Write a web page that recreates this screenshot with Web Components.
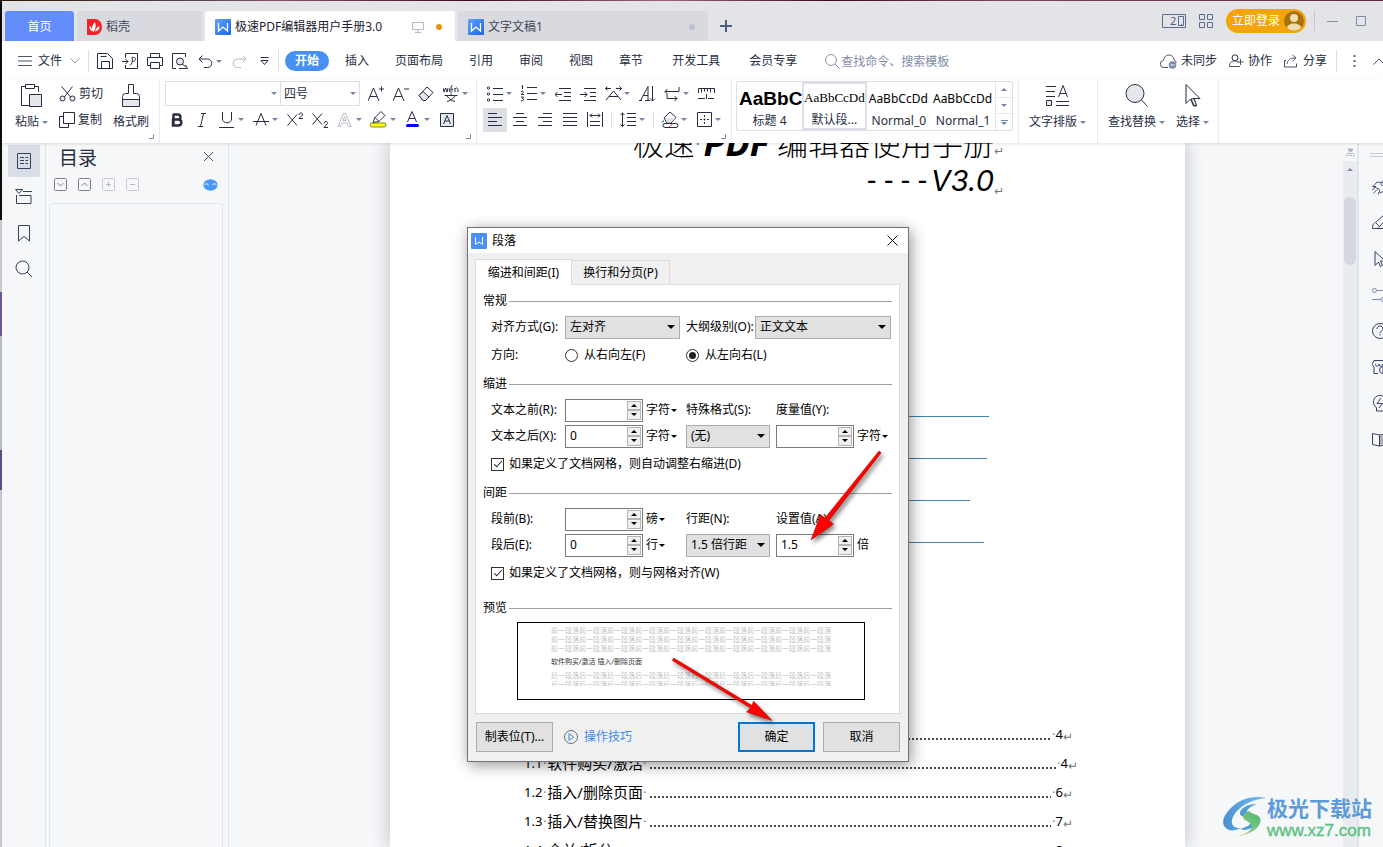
<!DOCTYPE html>
<html lang="zh-CN">
<head>
<meta charset="utf-8">
<title>极速PDF编辑器用户手册3.0</title>
<style>
html, body { margin: 0; height: 100%; overflow: hidden; }
body { font: 12px/16px "Noto Sans", "Noto Sans CJK SC", sans-serif; color: #262d3f; background: #f5f7f9; }
</style>
</head>
<body>
<wps-app></wps-app>
<script>
const base = `
:host, *, *::before, *::after { box-sizing: border-box; }
button, input, select { font: inherit; color: inherit; margin: 0; padding: 0; border: 0; background: none; border-radius: 0; }
button { cursor: default; }
a { color: inherit; text-decoration: none; }
`;

const W_LOGO = `<linearGradient id="w" x1="0" y1="0" x2="1" y2="1"><stop offset="0" stop-color="#66a3f5"/><stop offset="1" stop-color="#1467e8"/></linearGradient><rect width="16" height="16" rx="1" fill="url(#w)" stroke="none"/><path d="M3.5 4v8l4.5-4 4.5 4V4" stroke="#fff" stroke-width="1.3"/>`;

// name: [width, height, svg body]
const ICONS = {
  w: [16, 16, W_LOGO],
  wdlg: [16, 16, `<rect width="16" height="16" rx="1" fill="#4a90f5" stroke="none"/><path d="M4.500 4v7.500l3.500-2.500 3.500 2.500V4" stroke="#fff"/>`],
  docer: [15, 16, `<path d="M0 0h8a7 8 0 0 1 0 16H0z" fill="#f5222d" stroke="none"/><path d="M6.500 13C4 11 5 6 8 3c1 3 1 7-1.500 10zM5.500 12.500C3 11.500 2 9 2.500 6.500c1.500 1 2.700 3 3 6zM8 12.500c.5-2.500 2-4.500 4.500-5.500 0 3-1.500 5-4.500 5.500z" fill="#fff" stroke="none"/>`],
  monitor: [12, 12, `<path d="M.5 1.500h11v7H.5zM6 8.500v3M3 11.500h6" stroke="#b3b9cc"/>`],
  plus: [12, 12, `<path d="M6 0v12M0 6h12" stroke="#4e5d80" stroke-width="2"/>`],
  two: [24, 15, `<path d="M.5.500h23v13H.5zM16.500 2.500h5v9h-5zM19 10.500h1" stroke="#5c6c90"/>`],
  grid4: [14, 14, `<path d="M.5.500h5v5h-5zM8.500.500h5v5h-5zM.5 8.500h5v5h-5zM8.500 8.500h5v5h-5z" stroke="#5c6c90"/>`],
  avatar: [20, 20, `<circle cx="10" cy="10" r="10" fill="#a87408" stroke="none"/><circle cx="10" cy="7" r="4" fill="#f0dcae" stroke="none"/><path d="M3 17c0-6 14-6 14 0a10 10 0 0 1-14 0z" fill="#f0dcae" stroke="none"/>`],
  min: [11, 11, `<path d="M0 5.500h11" stroke="#7d8cab"/>`],
  max: [11, 11, `<path d="M.5.500h9v9h-9z" stroke="#7d8cab"/>`],
  menu: [14, 10, `<path d="M0 .5h14M0 5h14M0 9.500h14" stroke="#4d566b"/>`],
  chev: [10, 6, `<path d="M.5.500L5 5 9.500.500" stroke="#8a92a5"/>`],
  save: [16, 16, `<path d="M.5 15.500V.5h10l5 5v10zM4.500 15.500v-7h8v7M3.500 3.500h6" />`],
  export: [16, 16, `<path d="M3.500 5V.5h12v15h-12V12M0 8.500h6M3.500 6L6 8.500 3.500 11M8 12.500c2-1.500 3-4.500 2-8 5-1 4.500 4 0 4"/>`],
  print: [16, 16, `<path d="M3.500 4.500v-4h9v4M3.500 12.500h-3v-8h15v8h-3M3.500 9.500h9v6h-9z"/>`],
  preview: [16, 16, `<path d="M4 15.500H.5V.500h13V4M13.500 12l2 3.500H7"/><circle cx="8" cy="8.500" r="3.500" fill="#e2e5ea"/><path d="M10.500 11l3 3"/>`],
  undo: [15, 13, `<path d="M4.500.500L1 4l3.500 3.500M1 4h8.500a4.200 4.200 0 0 1 0 8.500H6"/>`],
  redo: [15, 13, `<path d="M10.500.500L14 4l-3.500 3.500M14 4H5.500a4.200 4.200 0 0 0 0 8.500H9" stroke="#b5b9c2"/>`],
  more: [9, 8, `<path d="M.5.500h8M1 3.500h7l-3.500 4z"/>`],
  search: [15, 15, `<circle cx="6" cy="6" r="5.500" stroke="#8490a8"/><path d="M10 10l4.500 4.500" stroke="#8490a8"/>`],
  cloud: [17, 15, `<path d="M8 13.500H4a3.500 3.500 0 0 1-.5-7c.5-4 3-5.500 5.500-5.500s5 2 5 5c1.500.5 2 1.500 2 3" stroke="#49536b"/><circle cx="12.500" cy="11" r="3.800" fill="#7c8cab" stroke="none"/><path d="M10.500 11h4" stroke="#fff"/>`],
  collab: [15, 14, `<circle cx="6" cy="3.800" r="3" /><path d="M.5 12.500c0-5 3-5.500 5-5.500 2 0 3 .5 4 1.500M.5 12.500H11M11.500 5v6M8.500 8h6" stroke="#49536b"/>`],
  share: [15, 14, `<path d="M2 6.500H.5v6.500h12V9.500M3 10c.5-4 3-6 8-6M8.500.8L12 4 8.500 7.200" stroke="#49536b"/>`],
  dots: [3, 14, `<path d="M.5 2h2M.5 7h2M.5 12h2" stroke="#5b6478" stroke-width="2"/>`],
  up: [12, 7, `<path d="M.5 6.500L6 1l5.500 5.500" stroke="#49536b"/>`],
  paste: [22, 24, `<path d="M8 21.500H.500v-19H4M13 2.500h4.500V8M4.500.500h9v4h-9z"/><path d="M8.500 10.500h12v12h-12z" fill="#e4e7eb"/>`],
  cut: [17, 16, `<path d="M2.500.5L12 11.500M13.500.5L5 11.500"/><circle cx="3.500" cy="12.500" r="2.500" fill="#e4e7eb"/><circle cx="13.500" cy="12.500" r="2.500" fill="#e4e7eb"/>`],
  copy: [16, 16, `<path d="M4 4.500H.5v11h9V12M4.500.500h11v11h-11z"/>`],
  brush: [19, 24, `<path d="M6.500.500h5v9h3a3 3 0 0 1 3 3v3H.500v-3a3 3 0 0 1 3-3h3z"/><path d="M.5 15.500h17v7H.500z" fill="#e4e7eb"/>`],
  aplus: [16, 16, `<path d="M0 15L5.500 2 11 15M2 10.500h7M11 3h5M13.500.5v5"/>`],
  aminus: [16, 16, `<path d="M0 15L5.500 2 11 15M2 10.500h7M11 3h5"/>`],
  eraser: [16, 16, `<path d="M1 9.500L9 1l6 5.500-7.500 8H5z"/><path d="M5 5.500l6 5.500-3.500 3.500H5L1 9.500z" fill="#e4e7eb"/>`],
  wen: [16, 17, `<path d="M0 3l1 4 1.500-4L4 7l1-4M6.500 5h3c0-3-3-3-3 0s2 2.500 3 1.500M8 2L9.500 0M12 7V3M12 4c1-2 3-1 3 1v2M1.500 10.500h13M8 8.500v2M4 11c2 3 5 5 8 5.500M12 11c-2 3-5 5-8 5.500"/>`],
  bold: [16, 16, `<path d="M4 2.500h4.500c4 0 4 5 0 5H4M4 7.500h5c4.500 0 4.500 6 0 6H4zM4.500 2v12" stroke-width="2.400"/>`],
  italic: [16, 16, `<path d="M7 1.500h5M4 14.500h5M9.500 1.500l-3 13"/>`],
  underline: [16, 16, `<path d="M3.500 0v7c0 5 9 5 9 0V0M0 15.500h15"/>`],
  strike: [16, 16, `<path d="M3 13.500L8 1.500l5 12M0 9.500h16"/>`],
  sup: [17, 16, `<path d="M.5 2.500l9.500 11M10 2.500l-9.500 11M12 3c0-3 4-2.500 3.500 0L12 6.500h4"/>`],
  sub: [17, 16, `<path d="M.5 1.500l9.500 11M10 1.500l-9.500 11M12 11.500c0-3 4-2.500 3.500 0L12 15.500h4"/>`],
  aout: [16, 16, `<path d="M1 14.500L6.500 1.500h2l5.500 13h-2.500L10 11H5l-1.500 3.500zM6 8.500h3L7.500 4.500z" stroke="#b5b9c2"/>`],
  hilite: [18, 17, `<rect x="0" y="12" width="16" height="4" rx="2" fill="#ff0" stroke="#7d8430"/><path d="M3 11.500l2-5 6-6 4 4-6 6zM5 6.500l4 4" fill="#fff"/>`],
  acolor: [16, 17, `<path d="M2.500 11L7 .5 11.500 11M4 7.500h6"/><rect x="1" y="13" width="13" height="3" rx="1.500" fill="#00f" stroke="none"/>`],
  abox: [16, 16, `<path d="M1.500 1.500h13v13h-13z" fill="#e4e7eb"/><path d="M4.500 12L8 3.500l3.500 8.500M6 9h4"/>`],
  bullets: [16, 16, `<path d="M6 2.500h10M6 8.500h10M6 14.500h10"/><circle cx="1.500" cy="2" r="1.200"/><circle cx="1.500" cy="8" r="1.200"/><circle cx="1.500" cy="14" r="1.200"/>`],
  numbers: [16, 17, `<path d="M6 2.500h10M6 8.500h10M6 14.500h10M.5 1l1-.7V4M0 6.500c3-1 3 1 0 3h3M0 12h2.500L1.500 14c2 0 1.500 2-1.500 2"/>`],
  outdent: [16, 16, `<path d="M4 2.500h12M9 6.500h7M9 10.500h7M4 14.500h12M0 8.500h7M2.500 6L0 8.500 2.500 11"/>`],
  indent: [16, 16, `<path d="M4 2.500h12M10 6.500h6M10 10.500h6M4 14.500h12M0 8.500h7M4.500 6L7 8.500 4.500 11"/>`],
  scale: [17, 16, `<path d="M0 2.500h6M2.500.5L.5 2.500l2 2M17 2.500h-6M14.500.5l2 2-2 2M1 14L8.500 5 16 14M4 10.500h9"/>`],
  sort: [17, 16, `<path d="M0 14.500h3M1.500 14.500L9 .5v14M4 9.500h5M6 14.500h5M13.500 0v15M11 12.500l2.500 2.500 2.500-2.500"/>`],
  tab: [16, 16, `<path d="M15 1v4.500H1M3.500 3L1 5.500 3.500 8M3 8v4.500h10M10.500 10l2.500 2.500-2.500 2.500"/>`],
  ruler: [17, 14, `<path d="M.5 6V1.500h16V6M3.500 1.500v4M6.500 1.500v3M9.500 1.500v3M12.500 1.500v4M0 11.500h7M10 11.500h6M8.500 7v5"/>`],
  al: [15, 14, `<path d="M0 .5h9M0 4.500h14M0 8.500h9M0 12.500h14"/>`],
  ac: [15, 14, `<path d="M3 .5h8M0 4.500h14M3 8.500h8M0 12.500h14"/>`],
  ar: [15, 14, `<path d="M5 .5h9M0 4.500h14M5 8.500h9M0 12.500h14"/>`],
  aj: [15, 14, `<path d="M0 .5h14M0 4.500h14M0 8.500h14M0 12.500h14"/>`],
  ad: [16, 15, `<path d="M.5 0v15M15.500 0v15M3 3.500h10M5 1.500L3 3.500l2 2M11 1.500l2 2-2 2M3 9.500h10M3 13.500h10"/>`],
  spacing: [16, 16, `<path d="M2.500.5v14M.5 3l2-2 2 2M.5 12.500l2 2 2-2M7 1.500h9M7 5.500h9M7 9.500h9M7 13.500h9"/>`],
  fill: [17, 17, `<path d="M8 1l6 5.500-5 5.500H5L2 7z" fill="#fff"/><path d="M3 7h10.500L9 11.500H5z" fill="#dfe2e8" stroke="none"/><path d="M1.500 9.500l-1 2" /><rect x="1" y="12.500" width="15" height="4" rx="2" fill="#fff"/><path d="M7 16l4-3.500" stroke="#e04848"/>`],
  borders: [15, 15, `<path d="M.5.500h14v14H.500z"/><path d="M7.500 3v9M3 7.500h9" stroke-dasharray="2 1.500"/>`],
  layout: [24, 22, `<path d="M0 1.500h10M0 6.500h9M0 11.500h9M12.500 12L17 .5 21.500 12M14 8.500h6M10 16.500h13M10 20.500h13"/><path d="M.5 15.500h5v5h-5z" fill="#e4e7eb"/>`],
  find: [24, 24, `<circle cx="10" cy="9.500" r="9" fill="#e4e7eb"/><path d="M16.500 16l6 6.500"/>`],
  cursor: [16, 24, `<path d="M1 .500v19l4.500-4.500 3 7h3l-2.500-7.500H15z" /><path d="M9 14.500l2.500 7h-2.500l-3-6.500z" fill="#e4e7eb"/>`],
  corner: [5, 5, `<path d="M4.500 0v4.500H0" stroke="#7d8cab"/>`],
  outline: [16, 18, `<path d="M1.500 1.500h13v15h-13zM4 5.500h4M4 8.500h4M4 11.500h4M9.500 5.500H12M9.500 8.500H12M9.500 11.500H12"/>`],
  chapter: [17, 16, `<path d="M.5.500h7L4 4.500zM8 2.500h9M4 6.500h12v8H1.500V6"/>`],
  bookmark: [12, 17, `<path d="M.5.500h11v15.500L6 11.500.5 16z"/>`],
  find2: [18, 18, `<circle cx="7.500" cy="7.500" r="6.500"/><path d="M12 12l5 5"/>`],
  close: [11, 11, `<path d="M1 1l9 9M10 1l-9 9" stroke-width=".9"/>`],
  bdown: [13, 13, `<rect x=".5" y=".5" width="12" height="12" rx="1" stroke="#7e8288"/><path d="M3.500 5l3 3 3-3" stroke="#7e8288"/>`],
  bup: [13, 13, `<rect x=".5" y=".5" width="12" height="12" rx="1" stroke="#7e8288"/><path d="M3.500 8l3-3 3 3" stroke="#7e8288"/>`],
  badd: [13, 13, `<rect x=".5" y=".5" width="12" height="12" rx="1" stroke="#c5c8cd"/><path d="M4 6.500h5M6.500 4v5" stroke="#b5b8bd"/>`],
  bsub: [13, 13, `<rect x=".5" y=".5" width="12" height="12" rx="1" stroke="#c5c8cd"/><path d="M4 6.500h5" stroke="#b5b8bd"/>`],
  smart: [15, 12, `<ellipse cx="7.500" cy="6" rx="7.200" ry="5.800" fill="#4a98f5" stroke="none"/><path d="M1.500 6l2-1.500L5.500 6M9.500 6l2-1.500 2 1.500" stroke="#fff"/>`],
  wheel: [9, 9, `<path d="M2 .500h5v2L4.500 4.500 2 2.500z" fill="#aab4cc" stroke="none"/><path d="M0 7.500h2.500M3.500 7.500H6M7 7.500h2M1 5.500h7" stroke="#aab4cc"/>`],
  handle: [16, 5, `<path d="M0 .5h16M0 3.500h16" stroke="#c5c9d2"/>`],
  rocket: [16, 16, `<path d="M1 7.500L5 3l4 .500C11 1 13 .500 15.500.500c0 3-1 5-3.500 7V12l-4 2-1-4zM0 11l3-2M1.500 14.500l3.500-4M6 15.500l1-2.500M0 7.500h4" stroke="#49587a"/><circle cx="10.500" cy="5" r="1.500" stroke="#49587a"/>`],
  pen: [16, 16, `<path d="M.5 13.500c0-4 1-5 3-6L12 0l3.500 3L8 11c-1 2-2 2.500-4 2.500M.5 13.500H16M4 8l3.500 3.500"/>`],
  arrow: [16, 16, `<path d="M3 .500v14L6.500 11l2 4.500 2-1-2-4.500H13z"/>`],
  slider: [16, 14, `<path d="M5 2.500h11M0 11.500h9" stroke="#7d8cab"/><circle cx="2.500" cy="2.500" r="2" stroke="#7d8cab"/><circle cx="11" cy="11.500" r="2" stroke="#7d8cab"/>`],
  help: [16, 16, `<circle cx="8" cy="8" r="7.500"/><path d="M5 6c0-4 6-4 6 0 0 2-3 2-3 4M8 11v1.500"/>`],
  shop: [16, 16, `<path d="M2 7.500c-2 0-1.500-2-1.500-3L2 1.500h14M2 7.500v7h4M3.500 5c0 3 3.500 3 3.500 0 0 3 3.500 3 3.500 0"/><circle cx="11" cy="11" r="3.500"/><path d="M11 8v6"/>`],
  bulb: [16, 17, `<path d="M4.500 16v-3.500c-5-3-4-12 3.500-12s8.500 9 3.500 12V16zM9 3l-4 5.500h5.500L7 13"/>`],
  book: [16, 15, `<path d="M.5 1.500l7 1.500v11l-7-1.500zM7.500 3L15 1.500v11L7.500 14"/><path d="M8 3.500h3v9H8z" fill="#a9aeb8" stroke="none"/>`],
  xdlg: [11, 11, `<path d="M.5.500l10 10M10.500.500l-10 10" stroke="#111"/>`],
  play: [14, 14, `<circle cx="7" cy="7" r="6.500" stroke="#666c77"/><path d="M5 3.500l4.500 3.500L5 10.500z" stroke="#3d86ea"/>`]
};

class WpsIcon extends HTMLElement {
  connectedCallback() {
    const [w, h, body] = ICONS[this.getAttribute('name')];
    this.attachShadow({ mode: 'open' }).innerHTML = `<style>:host{display:inline-block;flex:none;width:${w}px;height:${h}px;color:inherit}svg{display:block}</style>
    <svg width="${w}" height="${h}" fill="none" stroke="currentColor" aria-hidden="true">${body}</svg>`;
  }
}

class WpsTool extends HTMLElement {
  connectedCallback() {
    this.attachShadow({ mode: 'open' }).innerHTML = `<style>${base}
    :host{display:block;flex:none}
    button{display:flex;align-items:center;height:24px}
    .i{display:flex;width:16px;height:24px;align-items:center;justify-content:center}
    :host([on]) .i{background:#dde1e6;box-shadow:4px 0 #dde1e6,-4px 0 #dde1e6;border-radius:1px}
    .c{display:none;margin-left:3px;width:6px;border:3px solid transparent;border-top-color:#7484a3;border-bottom:0}
    :host([caret]) .c{display:block}
    </style><button aria-label="${this.getAttribute('label')}"><span class="i"><wps-icon name="${this.getAttribute('icon')}"></wps-icon></span><span class="c"></span></button>`;
  }
}

class WpsBig extends HTMLElement {
  connectedCallback() {
    this.attachShadow({ mode: 'open' }).innerHTML = `<style>${base}
    :host{display:block;flex:none}
    button{display:flex;flex-direction:column;align-items:center}
    .i{display:flex;height:29px;align-items:center}
    .t{display:flex;align-items:center;height:24px;white-space:nowrap;line-height:16px}
    .c{display:none;margin-left:3px;width:6px;border:3px solid transparent;border-top-color:#7484a3;border-bottom:0}
    :host([caret]) .c{display:block}
    </style><button><span class="i"><wps-icon name="${this.getAttribute('icon')}"></wps-icon></span><span class="t"><slot></slot><span class="c"></span></span></button>`;
  }
}

class WpsGroup extends HTMLElement {
  connectedCallback() {
    this.attachShadow({ mode: 'open' }).innerHTML = `<style>
    :host{display:flex;flex:none;box-sizing:border-box;position:relative;height:64px;padding-top:2px;border-right:1px solid #e8eaee}
    wps-icon{position:absolute;right:5px;bottom:4px;display:none}
    :host([corner]) wps-icon{display:block}
    </style><slot></slot><wps-icon name="corner"></wps-icon>`;
  }
}

class WpsTab extends HTMLElement {
  connectedCallback() {
    this.attachShadow({ mode: 'open' }).innerHTML = `<style>${base}
    :host{display:block;flex:0 1 250px;height:30px}
    :host([home]){flex-basis:69px}
    :host([small]){flex-basis:125px}
    button{display:flex;align-items:center;width:100%;height:30px;padding:2px 13px 0 10px;gap:4px;background:#d9dadf;color:#3e4759;border-radius:3px 3px 0 0;white-space:nowrap}
    :host([active]) button{background:#fff;color:#1c2230}
    :host([home]) button{background:#638dfb;color:#fff;justify-content:center;padding:2px 0 0}
    .end{margin-left:auto;display:flex;align-items:center;gap:12px}
    </style><button role="tab"><slot name="icon"></slot><slot></slot><span class="end"><slot name="end"></slot></span></button>`;
    if (this.hasAttribute('home')) this.shadowRoot.querySelector('.end').remove();
  }
}

class WpsTitlebar extends HTMLElement {
  connectedCallback() {
    this.attachShadow({ mode: 'open' }).innerHTML = `<style>${base}
    :host{display:flex;height:40px;align-items:flex-end;background:#e3e4e8;padding:0 16px 0 3px;gap:3px}
    .dot{width:6px;height:6px;border-radius:50%;background:#e6940a}
    .dot.off{background:#bcc1d3}
    .add{display:flex;width:30px;height:30px;align-items:center;justify-content:center}
    .right{display:flex;align-items:center;height:40px;margin-left:auto;flex:none}
    .two{display:grid;margin-right:13px;text-align:left}
    .two>*{grid-area:1/1}
    .two span{padding-left:8px;line-height:14px;color:#4e5d80;font-size:11px}
    .login{display:flex;align-items:center;height:24px;padding:0 2px 0 6px;gap:4px;border-radius:12px;background:#f5a50c;color:#fff;margin-left:13px}
    .bar{width:1px;height:20px;background:#c3c6ce;margin:0 12px 0 8px}
    .max{margin-left:18px}
    .two,.right>button{display:flex}
    .right>.two{display:grid}
    </style>
    <wps-tab home>首页</wps-tab>
    <wps-tab small><wps-icon slot="icon" name="docer"></wps-icon>稻壳</wps-tab>
    <wps-tab active><wps-icon slot="icon" name="w"></wps-icon>极速PDF编辑器用户手册3.0<wps-icon slot="end" name="monitor"></wps-icon><span slot="end" class="dot"></span></wps-tab>
    <wps-tab><wps-icon slot="icon" name="w"></wps-icon>文字文稿1<span slot="end" class="dot off"></span></wps-tab>
    <button class="add" aria-label="新建"><wps-icon name="plus"></wps-icon></button>
    <div class="right">
      <button class="two"><wps-icon name="two"></wps-icon><span>2</span></button>
      <button aria-label="应用"><wps-icon name="grid4"></wps-icon></button>
      <button class="login">立即登录<wps-icon name="avatar"></wps-icon></button>
      <span class="bar"></span>
      <button aria-label="最小化"><wps-icon name="min"></wps-icon></button>
      <button class="max" aria-label="最大化"><wps-icon name="max"></wps-icon></button>
    </div>`;
  }
}

class WpsMenubar extends HTMLElement {
  connectedCallback() {
    this.attachShadow({ mode: 'open' }).innerHTML = `<style>${base}
    :host{display:flex;height:38px;align-items:center;background:#fff;padding:2px 0 0 16px;white-space:nowrap;overflow:hidden}
    button{display:flex;align-items:center;flex:none}
    .file{gap:6px}.file wps-icon:last-child{margin-left:2px}
    .bar{flex:none;width:1px;height:22px;background:#dcdfe5}
    .file+.bar{margin-left:8px}
    .quick{display:flex;align-items:center;gap:9px;padding:0 6px 0 8px}
    nav{display:flex;align-items:center;gap:26px;margin-left:6px}
    nav .on{background:#4690f4;color:#fff;font-weight:700;padding:0 10px;height:20px;border-radius:10px;margin-right:-10px}
    nav .wide{margin-left:3px}
    label{display:flex;align-items:center;gap:1px;margin-left:28px}
    input{width:120px;height:20px;outline:0}
    input::placeholder{color:#7f8ba5;opacity:1}
    .right{display:flex;align-items:center;margin-left:auto;gap:12px;flex:none;margin-right:-2px}
    .right button{gap:4px}
    .right .bar{margin-left:-3px}
    .right .dots{padding:0 5px 0 4px}
    </style>
    <button class="file"><wps-icon name="menu"></wps-icon>文件<wps-icon name="chev"></wps-icon></button>
    <span class="bar"></span>
    <div class="quick">
      <wps-tool icon="save" label="保存"></wps-tool><wps-tool icon="export" label="输出为PDF"></wps-tool><wps-tool icon="print" label="打印"></wps-tool><wps-tool icon="preview" label="打印预览"></wps-tool><wps-tool icon="undo" label="撤销" caret></wps-tool><wps-tool icon="redo" label="恢复"></wps-tool><wps-tool icon="more" label="自定义"></wps-tool>
    </div>
    <span class="bar"></span>
    <nav><button class="on">开始</button><button>插入</button><button>页面布局</button><button>引用</button><button>审阅</button><button>视图</button><button>章节</button><button class="wide">开发工具</button><button class="wide">会员专享</button></nav>
    <label><wps-icon name="search"></wps-icon><input type="text" aria-label="查找命令、搜索模板" placeholder="查找命令、搜索模板"></label>
    <div class="right">
      <button><wps-icon name="cloud"></wps-icon>未同步</button>
      <button><wps-icon name="collab"></wps-icon>协作</button>
      <button><wps-icon name="share"></wps-icon>分享</button>
      <span class="bar"></span>
      <button class="dots" aria-label="更多"><wps-icon name="dots"></wps-icon></button>
      <button aria-label="收起"><wps-icon name="up"></wps-icon></button>
    </div>`;
  }
}

const tools = s => s.split(' ').map(t => {
  if (t === '|') return '<span class="bar"></span>';
  const [n, f] = t.split(':');
  return `<wps-tool icon="${n}" label="${n}" ${f === 'c' ? 'caret' : ''} ${f === 'on' ? 'on' : ''}></wps-tool>`;
}).join('');

class WpsRibbon extends HTMLElement {
  connectedCallback() {
    this.attachShadow({ mode: 'open' }).innerHTML = `<style>${base}
    :host{display:flex;height:64px;background:#fff;overflow:hidden;white-space:nowrap;box-shadow:0 1px 3px rgba(0,0,0,.12);position:relative}
    .col{display:flex;flex-direction:column;gap:1px}
    .row{display:flex;align-items:center;gap:9px;height:25px}
    .row .bar{width:1px;height:18px;background:#dcdfe5;margin:0 -1px}
    .ct{display:flex;align-items:center;gap:3px;height:25px}
    .clip{display:flex;padding:0 10px 0 13px}
    .clip .col{margin:0 10px 0 11px}
    .font{padding-left:5px;width:316px}
    .second{padding-left:4px}
    .para{padding-left:10px;width:254px}
    .row.tight{gap:0}
    .sel{display:flex;position:relative;border:1px solid #dcdfe5;height:25px;width:116px}
    .sel+.sel{width:80px;margin:0 8px 0 -1px}
    .sel select{appearance:none;width:100%;padding-left:3px;outline:0}
    .sel::after{content:"";position:absolute;right:3px;top:10px;border:3px solid transparent;border-top-color:#7484a3;border-bottom:0}
    .gal{display:flex;border:1px solid #dcdfe5;border-radius:2px;width:277px;height:50px;margin:0 5px 0 4px}
    .gal button{display:block;width:65px;color:#262d3f;line-height:16px}
    .gal button b,.gal button i{display:block;height:30px;padding-left:2px;font:12px/32px "Noto Sans",sans-serif;color:#000;text-align:left}
    .gal button b{font:700 19px/32px "Liberation Sans",sans-serif}
    .gal button.s{border:2px solid #dcdfe6}
    .gal button.s i{font:13px/28px "Liberation Serif",serif;height:28px;padding-left:0}
    .arr{width:17px;margin-left:auto;border-left:1px solid #e4e6ea;display:grid;grid-template-rows:16px 16px 16px}
    .arr span{display:grid;place-content:center;justify-items:center;gap:1px;border-bottom:1px solid #e4e6ea}
    .arr span:last-child{border:0}
    .arr span::after{content:"";border:3px solid transparent;border-top-color:#7484a3;border-bottom:0}
    .arr span:first-child::after{border:3px solid transparent;border-bottom-color:#7484a3;border-top:0}
    .arr span:last-child::before{content:"";width:7px;height:1px;background:#7484a3}
    .p5{padding:0 11px 0 10px}
    .p6{display:flex;padding:0 9px 0 10px}
    .p6 wps-big+wps-big{margin-left:11px}
    </style>
    <wps-group corner><div class="clip">
      <wps-big icon="paste" caret>粘贴</wps-big>
      <div class="col"><button class="ct"><wps-icon name="cut"></wps-icon>剪切</button><button class="ct"><wps-icon name="copy"></wps-icon>复制</button></div>
      <wps-big icon="brush">格式刷</wps-big></div>
    </wps-group>
    <wps-group corner><div class="col font">
      <div class="row tight"><span class="sel"><select aria-label="字体"><option></option></select></span><span class="sel"><select aria-label="字号"><option>四号</option></select></span><span class="row">${tools('aplus aminus eraser wen:c')}</span></div>
      <div class="row second">${tools('bold italic underline:c strike:c sup sub aout:c hilite:c acolor:c abox')}</div></div>
    </wps-group>
    <wps-group corner><div class="col para">
      <div class="row">${tools('bullets:c numbers:c outdent indent scale:c sort tab:c ruler')}</div>
      <div class="row">${tools('al:on ac ar aj ad | spacing:c | fill:c borders:c')}</div></div>
    </wps-group>
    <wps-group><div class="gal">
      <button><b>AaBbC</b>标题 4</button><button class="s"><i>AaBbCcDd</i>默认段...</button><button><i>AaBbCcDd</i>Normal_0</button><button><i>AaBbCcDd</i>Normal_1</button>
      <div class="arr"><span></span><span></span><span></span></div></div>
    </wps-group>
    <wps-group><div class="p5"><wps-big icon="layout" caret>文字排版</wps-big></div></wps-group>
    <wps-group><div class="p6"><wps-big icon="find" caret>查找替换</wps-big><wps-big icon="cursor" caret>选择</wps-big></div></wps-group>`;
  }
}

class WpsOutline extends HTMLElement {
  connectedCallback() {
    this.attachShadow({ mode: 'open' }).innerHTML = `<style>${base}
    :host{display:flex;flex:none;background:#f5f7f9;color:#36415c}
    .rail{display:flex;flex-direction:column;align-items:center;gap:4px;width:44px;padding-top:2px;border-right:1px solid #e1e4ea}
    .rail button{display:flex;align-items:center;justify-content:center;width:32px;height:32px;border-radius:2px}
    .rail button.on{background:#d9dee6}
    .pane{display:flex;flex-direction:column;width:183px;border-right:1px solid #e1e4ea;padding:0 5px 0 3px}
    header{display:flex;align-items:center;justify-content:space-between;padding:0 9px 0 10px;height:30px}
    h2{margin:0;font-size:19px;line-height:26px;font-weight:400;color:#262d3f}
    .tb{display:flex;align-items:center;gap:11px;padding:0 5px 0 5px;height:23px}
    .tb button{display:flex}
    .tb :last-child{margin-left:auto}
    .tree{flex:1;border:1px solid #e1e4ea;border-bottom:0;border-radius:3px 3px 0 0;margin-top:7px}
    </style>
    <div class="rail"><button class="on" aria-label="目录"><wps-icon name="outline"></wps-icon></button><button aria-label="章节"><wps-icon name="chapter"></wps-icon></button><button aria-label="书签"><wps-icon name="bookmark"></wps-icon></button><button aria-label="查找"><wps-icon name="find2"></wps-icon></button></div>
    <div class="pane"><header><h2>目录</h2><button aria-label="关闭"><wps-icon name="close"></wps-icon></button></header>
    <div class="tb"><button aria-label="展开"><wps-icon name="bdown"></wps-icon></button><button aria-label="收起"><wps-icon name="bup"></wps-icon></button><button aria-label="增加"><wps-icon name="badd"></wps-icon></button><button aria-label="减少"><wps-icon name="bsub"></wps-icon></button><button aria-label="智能识别"><wps-icon name="smart"></wps-icon></button></div>
    <div class="tree"></div></div>`;
  }
}

class TocRow extends HTMLElement {
  connectedCallback() {
    this.attachShadow({ mode: 'open' }).innerHTML = `<style>
    :host{display:flex;align-items:center;height:29px;color:#000;font-size:15px;line-height:29px;margin-right:112px}
    :host([wide]){margin-right:107px}
    .d{flex:1;height:2px;margin:9px 1px 0 4px;background:repeating-linear-gradient(90deg,#4d4a44 0 2px,transparent 2px 4px)}
    .n{font-size:13px}
    .r{font-size:12px;color:#777;padding-top:4px}
    .s{font-size:13px;color:#888}
    .t{white-space:nowrap}
    .n+.s{width:5px;text-align:center}
    </style><span class="n">${this.getAttribute('no') || ''}</span><span class="s">·</span><span class="t"><slot></slot></span><span class="s">·</span><span class="d"></span><span class="s">·</span><span class="n">${this.getAttribute('page')}</span><span class="r">↵</span>`;
  }
}

class WpsDocument extends HTMLElement {
  connectedCallback() {
    this.attachShadow({ mode: 'open' }).innerHTML = `<style>${base}
    :host{display:flex;flex:1;min-width:0;overflow:hidden;justify-content:center;padding-left:3px;background:#f5f7f9}
    .page{flex:0 1 795px;background:#fff;box-shadow:0 0 16px 1px rgba(60,65,75,.28);padding-left:134px}
    .title,.ver{display:flex;justify-content:flex-end;align-items:center;padding-right:181px;color:#000;white-space:nowrap}
    .title{height:36px;margin-top:-18px;font-size:31px;line-height:36px;font-weight:300}
    .title b{font:italic 700 36px/36px "Open Sans",sans-serif;margin:0 8px 0 3px}
    .title small{font-size:24px;color:#888}
    .ver{height:40px;font:28px/40px "DejaVu Sans Mono",monospace}
    .ver em{font:italic 29px/40px Inter,sans-serif}
    .r{font:12px/12px "DejaVu Sans",sans-serif;color:#777;align-self:flex-end;padding-bottom:4px}
    .links{margin-top:174px;padding-bottom:177px}
    .links a{display:block;height:42px;border-bottom:1px solid #3f83b0}
    .l1{margin-right:196px}.l2{margin-right:198px}.l3{margin-right:215px}.l4{margin-right:201px}
    </style>
    <article class="page">
      <div class="title">极速<small>·</small><b>PDF</b>编辑器使用手册<span class="r">↵</span></div>
      <div class="ver">----<em>V3.0</em><span class="r">↵</span></div>
      <div class="links"><a class="l1" href="#a" aria-label="链接一" ></a><a class="l2" href="#b" aria-label="链接二"></a><a class="l3" href="#c" aria-label="链接三"></a><a class="l4" href="#d" aria-label="链接四"></a></div>
      <toc-row page="4"></toc-row>
      <toc-row no="1.1" page="4" wide>软件购买/激活</toc-row>
      <toc-row no="1.2" page="6">插入/删除页面</toc-row>
      <toc-row no="1.3" page="7">插入/替换图片</toc-row>
      <toc-row no="1.4" page="8">合并/拆分</toc-row>
    </article>`;
  }
}

class WpsSide extends HTMLElement {
  connectedCallback() {
    this.attachShadow({ mode: 'open' }).innerHTML = `<style>${base}
    :host{display:flex;flex:none;background:#f5f7f9;color:#36415c}
    .sb{display:flex;flex-direction:column;width:14px}
    .w{display:grid;place-items:center;height:18px}
    .track{flex:1;background:#e9ebf0;display:flex;flex-direction:column;align-items:center;padding-top:7px}
    .track i{border:3px solid transparent;border-bottom-color:#7d8cab;border-top:0}
    .track b{width:12px;height:68px;border-radius:6px;background:#d3d7df;margin-top:26px}
    .rail{width:26px;overflow:hidden;border-left:2px solid #e1e4ea;padding:10px 0 0 13px;display:flex;flex-direction:column}
    .rail button{display:flex;align-items:center;height:36px;flex:none}
    .rail .h{height:16px;margin-left:-2px}
    </style><div class="sb"><div class="w"><wps-icon name="wheel"></wps-icon></div><div class="track"><i></i><b></b></div></div>
    <div class="rail"><wps-icon class="h" name="handle"></wps-icon>${['rocket','pen','arrow','slider','help','shop','bulb','book'].map(n => `<button aria-label="${n}"><wps-icon name="${n}"></wps-icon></button>`).join('')}</div>`;
  }
}

const spin = (id, v) => `<span class="spin"><input id="${id}" type="text" value="${v}"><span class="ud"><button aria-label="增加"></button><button aria-label="减少"></button></span></span>`;

class ParagraphDialog extends HTMLElement {
  connectedCallback() {
    const before = '前一段落'.repeat(10), after = '后一段落'.repeat(10);
    this.attachShadow({ mode: 'open' }).innerHTML = `<style>${base}
    :host{display:block;width:442px;border:1px solid #6f7276;background:#f0f0f0;color:#000;box-shadow:2px 3px 14px rgba(0,0,0,.42);white-space:nowrap}
    header{display:flex;align-items:center;height:25px;background:#fff;padding:0 10px 0 3px;gap:5px}
    header button{display:flex;margin-left:auto}
    .tabs{display:flex;align-items:flex-end;height:31px;padding-left:7px}
    .tabs button{height:24px;width:98px;border:1px solid #dcdcdc;border-left:0;border-bottom:0}
    .tabs button.on{background:#fff;height:26px;width:97px;border-left:1px solid #dcdcdc;margin-bottom:-1px;position:relative}
    .panel{border:1px solid #dcdcdc;background:#fff;margin:0 8px 0 7px;padding:4px 7px 13px}
    .hd{display:flex;align-items:center;gap:2px;height:24px}
    .hd::after{content:"";flex:1;height:1px;background:#a0a0a0}
    .row{display:grid;align-items:center;height:28px;padding-left:8px}
    .a{grid-template-columns:74px 121px 69px 136px}
    .b{grid-template-columns:74px 121px 1fr}
    .m{grid-template-columns:74px 81px 40px 90px 81px 1fr;height:26px}
    .c{height:30px}
    .hd.g3{margin-top:3px;margin-bottom:1px}.hd.g2{margin-top:2px;margin-bottom:1px}.hd.g8{margin-top:8px}
    .row label{display:flex;align-items:center}
    .sel{display:block;position:relative;height:23px;width:115px}
    .sel select{appearance:none;width:100%;height:23px;background:#e1e1e1;border:1px solid #adadad;padding-left:4px;outline:0}
    .sel::after{content:"";position:absolute;right:5px;top:9px;border:4px solid transparent;border-top-color:#000;border-bottom:0}
    .sel.w{width:136px}.sel.s{width:84px}
    .spin{display:flex;width:78px;height:23px;border:1px solid #7a7a7a;background:#fff;padding:1px}
    .spin input{flex:1;min-width:0;padding-left:3px;outline:0}
    .ud{display:grid;width:14px;gap:0}
    .ud button{display:grid;place-content:center;border:1px solid #b4b4b4;background:#f0f0f0}
    .ud button::after{content:"";border:3px solid transparent;border-bottom-color:#000;border-top:0}
    .ud button+button::after{border:3px solid transparent;border-top-color:#000;border-bottom:0}
    .u{display:flex;align-items:center;gap:1px}
    .u::after{content:"";border:3px solid transparent;border-top-color:#000;border-bottom:0}
    input[type=radio]{appearance:none;width:13px;height:13px;border:1px solid #333;border-radius:50%;margin-right:6px;display:grid;place-content:center}
    input[type=radio]:checked::after{content:"";width:7px;height:7px;border-radius:50%;background:#222}
    input[type=checkbox]{appearance:none;width:13px;height:13px;border:1px solid #333;margin-right:5px;display:grid;place-content:center}
    input[type=checkbox]::after{content:"";width:8px;height:4px;border:solid #222;border-width:0 0 1px 1px;transform:rotate(-48deg);margin-bottom:2px}
    .pv{border:1px solid #000;margin:2px 27px 0 34px;height:78px;padding:3px 0 0 33px;font-size:7px;line-height:9px;color:#9a9a9a;font-weight:300}
    .pv p{margin:0;height:9px}
    .pv .me{color:#333;margin:4px 0 5px;font-weight:400}
    .pv .cut{overflow:hidden;height:6px}
    footer{display:flex;align-items:center;padding:8px 8px 9px;gap:8px}
    footer .btn{width:77px;height:30px;background:#e1e1e1;border:1px solid #adadad}
    footer .ok{border:2px solid #0078d7;margin-left:auto}
    footer a{display:flex;align-items:center;gap:6px;color:#3d8af0;margin-left:3px}
    </style>
    <header><wps-icon name="wdlg"></wps-icon>段落<button aria-label="关闭"><wps-icon name="xdlg"></wps-icon></button></header>
    <div class="tabs"><button class="on">缩进和间距(I)</button><button>换行和分页(P)</button></div>
    <div class="panel">
      <div class="hd">常规</div>
      <div class="row a"><label for="al">对齐方式(G):</label><span class="sel"><select id="al"><option>左对齐</option></select></span><label for="ol">大纲级别(O):</label><span class="sel w"><select id="ol"><option>正文文本</option></select></span></div>
      <div class="row b"><span>方向:</span><label><input type="radio" name="dir">从右向左(F)</label><label><input type="radio" name="dir" checked>从左向右(L)</label></div>
      <div class="hd g3">缩进</div>
      <div class="row m"><label for="r">文本之前(R):</label>${spin('r', '')}<span class="u">字符</span><label for="sp">特殊格式(S):</label><label for="y">度量值(Y):</label></div>
      <div class="row m"><label for="x">文本之后(X):</label>${spin('x', '0')}<span class="u">字符</span><span class="sel s"><select id="sp"><option>(无)</option></select></span>${spin('y', '')}<span class="u">字符</span></div>
      <div class="row c"><label><input type="checkbox" checked>如果定义了文档网格，则自动调整右缩进(D)</label></div>
      <div class="hd g2">间距</div>
      <div class="row m"><label for="b">段前(B):</label>${spin('b', '')}<span class="u">磅</span><label for="n">行距(N):</label><label for="av">设置值(A):</label></div>
      <div class="row m"><label for="e">段后(E):</label>${spin('e', '0')}<span class="u">行</span><span class="sel s"><select id="n"><option>1.5 倍行距</option></select></span>${spin('av', '1.5')}<span>倍</span></div>
      <div class="row c"><label><input type="checkbox" checked>如果定义了文档网格，则与网格对齐(W)</label></div>
      <div class="hd g8">预览</div>
      <div class="pv"><p>${before}</p><p>${before}</p><p>${before}</p><p class="me">软件购买/激活 插入/删除页面</p><p>${after}</p><p class="cut">${after}</p></div>
    </div>
    <footer><button class="btn">制表位(T)...</button><a href="#tips"><wps-icon name="play"></wps-icon>操作技巧</a><button class="btn ok">确定</button><button class="btn">取消</button></footer>`;
  }
}

class PointerArrows extends HTMLElement {
  connectedCallback() {
    this.attachShadow({ mode: 'open' }).innerHTML = `<style>:host{display:block;pointer-events:none}svg{display:block;overflow:visible;filter:drop-shadow(2px 3px 2px rgba(0,0,0,.5))}</style>
    <svg width="442" height="535" fill="#f00" stroke="#b00000" stroke-width=".5" aria-hidden="true">
    <path d="M412 224l2.200 1.800L362 293.500l4.500 3.500L344 313l9.500-25.500 4.500 3.500z"/>
    <path d="M206.700 431l-1.400 2.400L283.500 481l-4 4L305 493.500 286.500 474l-1.500 4.500z"/></svg>`;
  }
}

class SiteMark extends HTMLElement {
  connectedCallback() {
    this.attachShadow({ mode: 'open' }).innerHTML = `<style>
    :host{display:flex;align-items:center;white-space:nowrap;pointer-events:none}
    strong{display:block;font:700 21px/26px "Noto Sans CJK SC",sans-serif;color:#5c9bd8}
    span{display:block;font:17px/22px "Liberation Sans",sans-serif;color:#5cc285;-webkit-text-stroke:.4px #5cc285}
    svg{display:block;flex:none}
    </style>
    <svg width="44" height="44" aria-hidden="true"><defs><linearGradient id="g" x1="0" y1="0" x2="1" y2="0"><stop offset="0" stop-color="#4a90d0"/><stop offset="1" stop-color="#73c0ee"/></linearGradient><linearGradient id="h" x1="1" y1="0" x2="0" y2="1"><stop offset="0" stop-color="#45b36b"/><stop offset=".6" stop-color="#8fd08a"/><stop offset="1" stop-color="#f0e23c"/></linearGradient></defs>
    <path d="M44 2C30-1 16 3 7 13c-9 9-9 18-1 21 3 1 8 0 12-2C8 33 6 25 13 16 20 8 31 3 44 2z" fill="url(#g)"/>
    <path d="M34 8c-10 0-18 5-17 10 1 4 10 3 11 7 1 3-4 6-11 8l4 1c9-1 15-6 13-11-2-4-10-3-10-7 0-3 4-6 10-8z" fill="#4f9fd6"/>
    <path d="M27 15c-3 3 14 2 10 12-3 8-13 13-33 15 13-1 24-5 25-12 0-4-9-5-9-9 0-3 3-5 7-6z" fill="url(#h)"/></svg>
    <div><strong>极光下载站</strong><span>www.xz7.com</span></div>`;
  }
}

class WpsApp extends HTMLElement {
  connectedCallback() {
    this.attachShadow({ mode: 'open' }).innerHTML = `<style>
    :host{display:flex;flex-direction:column;height:100vh;overflow:hidden;position:relative;box-sizing:border-box;padding:1px 0 0 2px;
      background:linear-gradient(#0c0c0e 0 220px,#c6c8cc 220px 292px,#6f5596 292px 336px,#b9bbc2 336px 450px,#5f4b86 450px 490px,#c6c8cc 490px) 0 0/2px 100% no-repeat,linear-gradient(90deg,#2a1506,#5a4a50 15%,#8a5060 20%,#3c0a1e 34%,#a06474 48%,#3c0a1e 60%,#7a4656 72%,#5e2c3c)}
    main{display:flex;flex:1;min-height:0}
    paragraph-dialog,pointer-arrows{position:absolute;left:467px;top:227px}
    site-mark{position:absolute;right:11px;bottom:5px}
    </style>
    <wps-titlebar></wps-titlebar><wps-menubar></wps-menubar><wps-ribbon></wps-ribbon>
    <main><wps-outline></wps-outline><wps-document></wps-document><wps-side></wps-side></main>
    <paragraph-dialog></paragraph-dialog><pointer-arrows></pointer-arrows><site-mark></site-mark>`;
  }
}

Object.entries({ 'wps-icon': WpsIcon, 'wps-tool': WpsTool, 'wps-big': WpsBig, 'wps-group': WpsGroup, 'wps-tab': WpsTab, 'wps-titlebar': WpsTitlebar, 'wps-menubar': WpsMenubar, 'wps-ribbon': WpsRibbon, 'wps-outline': WpsOutline, 'toc-row': TocRow, 'wps-document': WpsDocument, 'wps-side': WpsSide, 'paragraph-dialog': ParagraphDialog, 'pointer-arrows': PointerArrows, 'site-mark': SiteMark, 'wps-app': WpsApp })
  .forEach(([n, c]) => customElements.define(n, c));
</script>
</body>
</html>
